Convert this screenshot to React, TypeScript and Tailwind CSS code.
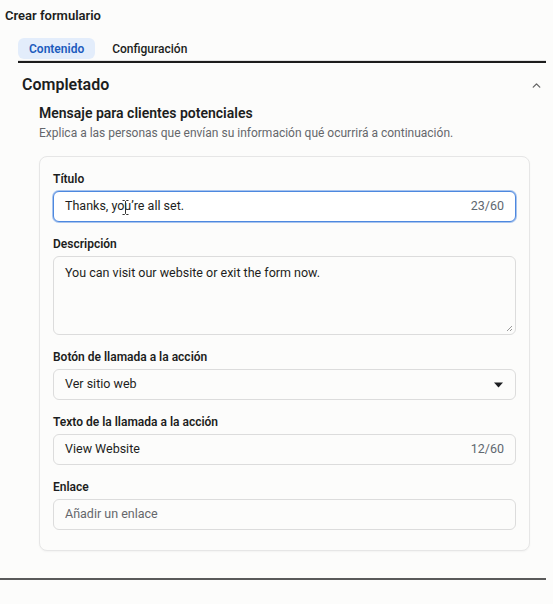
import { ChevronUp } from "lucide-react";

function Label({ children }: { children: React.ReactNode }) {
  return <div className="text-[12px] leading-4 font-semibold text-[#1c1e21]">{children}</div>;
}

function Field({ label, children }: { label: string; children: React.ReactNode }) {
  return (
    <div className="flex flex-col gap-[4px]">
      <Label>{label}</Label>
      {children}
    </div>
  );
}

export default function App() {
  return (
    <div
      className="w-[553px] h-[604px] bg-[#fcfcfb] text-[#1c1e21] overflow-hidden"
      style={{ fontFamily: "Roboto, 'Liberation Sans', sans-serif" }}
    >
      <div className="pl-[5px] pt-[8px] text-[13px] leading-4 font-semibold">Crear formulario</div>

      {/* tabs */}
      <div className="ml-[18px] mr-[7px] mt-[14px]">
        <div className="flex items-center gap-[17px]">
          <div className="h-[21px] px-[11px] flex items-center rounded-md bg-[#e3edfb] text-[#1b5bbd] text-[12px] font-semibold">
            Contenido
          </div>
          <div className="text-[12px] font-medium text-[#1c1e21]">Configuración</div>
        </div>
        <div className="mt-[1px] h-px bg-[#e2e2e2]" />
        <div className="h-[2px] bg-[#1c1c1c]" />
      </div>

      {/* section header */}
      <div className="flex items-center justify-between pl-[22px] pr-[10px] mt-[12px]">
        <div className="text-[16px] leading-5 font-semibold">Completado</div>
        <ChevronUp className="w-[13px] h-[13px] text-[#666]" strokeWidth={2.5} />
      </div>

      <div className="pl-[39px] mt-[9px]">
        <div className="text-[14px] leading-[18px] font-semibold">Mensaje para clientes potenciales</div>
        <div className="text-[12px] leading-4 text-[#65676b] mt-[3px]">
          Explica a las personas que envían su información qué ocurrirá a continuación.
        </div>
      </div>

      {/* card */}
      <div className="ml-[39px] mt-[15px] w-[491px] rounded-lg border border-[#e6e6e6] bg-[#fcfcfb] shadow-[0_1px_2px_rgba(0,0,0,0.04)] px-[13px] pt-[14px] pb-[20px] flex flex-col gap-[14px]">
        <Field label="Título">
          <div className="relative h-[31px] rounded-md border border-[#4d88df] ring-1 ring-[#a8c4ee] bg-white flex items-center justify-between px-[11px] text-[12.5px]">
            <span>Thanks, you’re all set.</span>
            <span className="text-[#606770]">23/60</span>
            <svg className="absolute left-[68px] top-[8px]" width="7" height="15" viewBox="0 0 7 15">
              <path d="M0.5 0.5h2l1 1 1-1h2M3.5 1.5v12M0.5 14.5h2l1-1 1 1h2" fill="none" stroke="#333" strokeWidth="1" />
            </svg>
          </div>
        </Field>

        <Field label="Descripción">
          <div className="relative h-[79px] rounded-md border border-[#dcdcdc] bg-[#fcfcfb] px-[11px] pt-[7px] text-[12.5px]">
            You can visit our website or exit the form now.
            <svg className="absolute right-[2px] bottom-[2px]" width="7" height="7" viewBox="0 0 7 7">
              <path d="M6 1L1 6M6 4L4 6" stroke="#999" strokeWidth="1" />
            </svg>
          </div>
        </Field>

        <Field label="Botón de llamada a la acción">
          <div className="h-[31px] rounded-md border border-[#dcdcdc] bg-[#fcfcfb] flex items-center justify-between px-[11px] text-[12.5px]">
            <span>Ver sitio web</span>
            <svg width="9" height="6" viewBox="0 0 9 6" className="mr-[1px]">
              <path d="M0 0.5h9L4.5 5.5z" fill="#1c1e21" />
            </svg>
          </div>
        </Field>

        <Field label="Texto de la llamada a la acción">
          <div className="h-[31px] rounded-md border border-[#dcdcdc] bg-[#fcfcfb] flex items-center justify-between px-[11px] text-[12.5px]">
            <span>View Website</span>
            <span className="text-[#606770]">12/60</span>
          </div>
        </Field>

        <Field label="Enlace">
          <div className="h-[31px] rounded-md border border-[#dcdcdc] bg-[#fcfcfb] flex items-center px-[11px] text-[12.5px] text-[#65676b]">
            Añadir un enlace
          </div>
        </Field>
      </div>

      <div className="mt-[27px] mr-[7px] h-[2px] bg-[#5a5a5a]" />
    </div>
  );
}
